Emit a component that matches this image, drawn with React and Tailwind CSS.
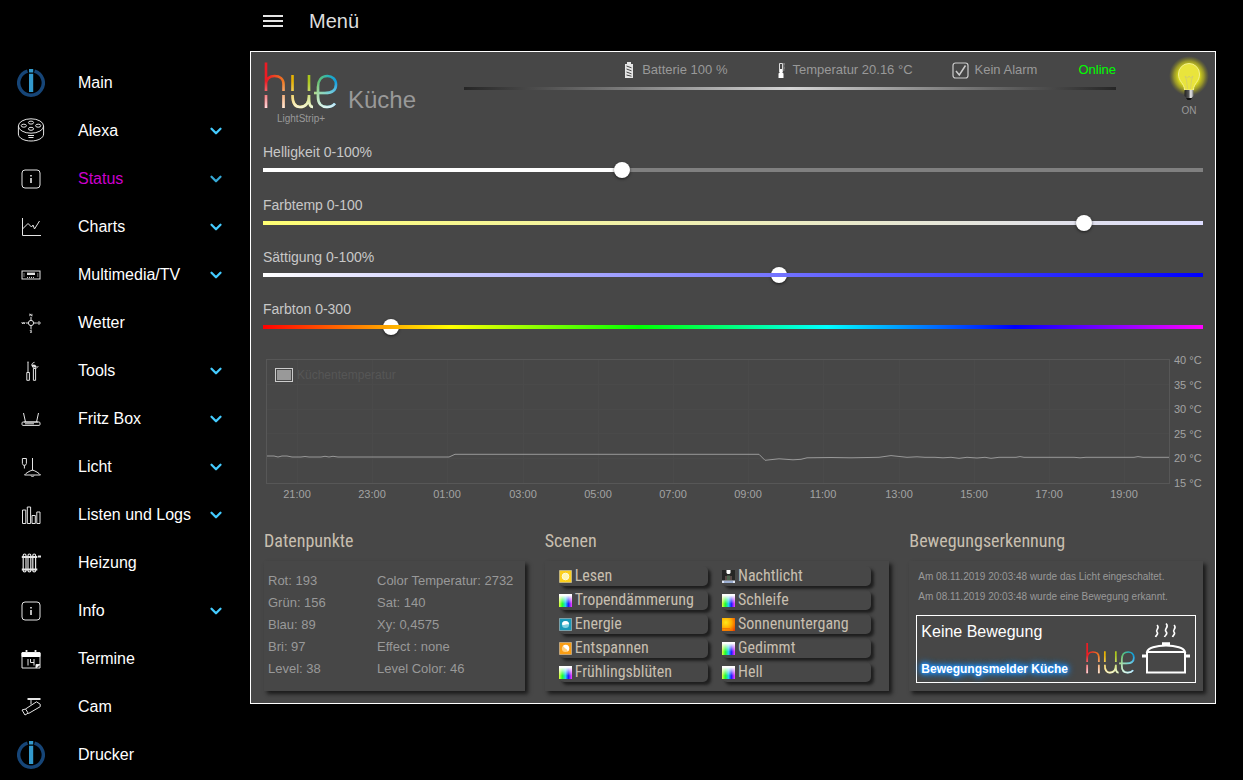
import React, { useId, useState } from "react"
import { FiChevronDown } from "react-icons/fi"

// ---------- sidebar icons ----------

const IoBrokerIcon = () => (
  <svg className="size-7" viewBox="0 0 28 28" fill="none">
    <path d="M10.5 2.1A12.3 12.3 0 1 0 17.5 2.1" stroke="#164577" strokeWidth="3.4" />
    <path d="M12 0h4.2v3.600h-4.200zM12 4.800h4.200V23h-4.200z" fill="#3399cc" />
  </svg>
)

// shared frame for the thin white line icons
const Line = ({ children, size = "size-5", box = 20 }) => (
  <svg
    className={size}
    viewBox={`0 0 ${box} ${box}`}
    fill="none"
    stroke="#e5e5e5"
    strokeWidth="1"
  >
    {children}
  </svg>
)

const EchoIcon = () => (
  <Line size="size-7" box={28}>
    <ellipse cx="14" cy="9" rx="12.6" ry="7.2" />
    <path d="M1.4 9v8c0 4 5.6 7 12.6 7s12.6-3 12.6-7V9" />
    <ellipse cx="14" cy="5.600" rx="2.600" ry="1.500" />
    <ellipse cx="14" cy="11.800" rx="2.600" ry="1.500" />
    <ellipse cx="6.800" cy="8.700" rx="2.600" ry="1.500" />
    <ellipse cx="21.200" cy="8.700" rx="2.600" ry="1.500" />
    <path d="M11 18.500h6M11.500 20.500h5" />
  </Line>
)

const InfoIcon = () => (
  <Line>
    <rect x="1" y="1" width="18" height="18" rx="3" />
    <path d="M10 6v1.6M10 9v5" strokeWidth="1.6" />
  </Line>
)

const ChartIcon = () => (
  <Line>
    <path d="M1.500 1v17.500H20M1.500 12l5.500-5.500 3.500 3.500 1.500-2 1.500 4L18.500 4" />
  </Line>
)

const ReceiverIcon = () => (
  <Line>
    <rect x="1" y="6" width="18" height="8" />
    <path d="M6 8.800h8" strokeWidth="2.400" />
    <path d="M3 8.500v3.500M16.800 8.500v3.500M6 12.400h8" strokeDasharray="1 1" />
  </Line>
)

const CompassIcon = () => (
  <Line>
    <circle cx="10" cy="10" r="2.600" />
    <path d="M10 4v3M10 13v3M5 10h2.400M12.600 10h3.200" />
    <path
      d="M8.900 3.200V.8l2 2.400V.8M.8 9l.8 2 .8-1.600.8 1.600.8-2M11 17.300c-2-.6-2.400.8-1 1.100s1 1.500-1 .9"
      strokeWidth=".9"
    />
    <circle cx="18" cy="10" r="1.200" strokeWidth=".9" />
  </Line>
)

const ToolsIcon = () => (
  <Line>
    <path d="M7 1v10M5.800 11.500h2.600v7.800H5.800zM6.500 1h1" />
    <path d="M12.400 7.500h2.200v11.800h-2.200zM13.500 1.300c-2 .5-3 1.800-2.600 3.200l1.800 2.800h2.600l2-2.200" />
    <path d="M11 4.500l2.500.3 1.500 1.500" strokeWidth="2.200" />
  </Line>
)

const RouterIcon = () => (
  <Line>
    <path d="M2.500 4l2 9M17.500 4l-2 9M3 13h14" />
    <rect x="1" y="13" width="18" height="3.400" rx="1" />
    <path d="M4 14.800h9" />
  </Line>
)

const LampIcon = () => (
  <Line>
    <path d="M1.400 1.500h4v5l-1 1.800h-2l-1-1.800zM3.400 8.500v3M11.500 1v12.500M11.500 13c-3 1-6.500 3-8 5h16c-1.500-2-5-4-8-5zM10 18.500c.3 1.500 2.700 1.500 3 0" />
  </Line>
)

const BarsIcon = () => (
  <Line>
    <path d="M1.500 5h3.300v13.500H1.500zM6.300 2h3.300v16.500H6.300zM11 10.500h3.300v8H11zM15.800 7h3.200v11.500h-3.200z" />
  </Line>
)

const RadiatorIcon = () => (
  <Line>
    {[2.2, 7, 11.8].map((x) => (
      <rect key={x} x={x} y="1" width="2.800" height="18" rx="1.400" strokeWidth="1.200" />
    ))}
    <path d="M.8 4h15.500M.8 16.500h15.500" strokeWidth="2" />
    <path d="M17 3.500h3" strokeWidth="2" />
  </Line>
)

const CalendarIcon = () => (
  <Line>
    <path d="M1 3.500h18V19H1z" />
    <path d="M1 4h18v3.500H1z" fill="#fff" stroke="#fff" />
    <path d="M5.500 1v3M14.500 1v3" strokeWidth="1.800" />
    <path d="M7 10v6.500M9.500 10v3.500h3.500M13 10v6.500" />
    <path d="M15 19v-3.500h4z" fill="#fff" />
  </Line>
)

const CamIcon = () => (
  <Line>
    <path d="M6.500 2H19.500" strokeWidth="2" />
    <path d="M10 3v4.500M4.500 12L15.500 4.800l3.700 2.400v2.500L7.500 16.500zM4.500 12l-3.500 1 3 5 3-1.800" />
  </Line>
)

const MENU = [
  { label: "Main", Icon: IoBrokerIcon },
  { label: "Alexa", Icon: EchoIcon, sub: true },
  { label: "Status", Icon: InfoIcon, sub: true, active: true },
  { label: "Charts", Icon: ChartIcon, sub: true },
  { label: "Multimedia/TV", Icon: ReceiverIcon, sub: true },
  { label: "Wetter", Icon: CompassIcon },
  { label: "Tools", Icon: ToolsIcon, sub: true },
  { label: "Fritz Box", Icon: RouterIcon, sub: true },
  { label: "Licht", Icon: LampIcon, sub: true },
  { label: "Listen und Logs", Icon: BarsIcon, sub: true },
  { label: "Heizung", Icon: RadiatorIcon },
  { label: "Info", Icon: InfoIcon, sub: true },
  { label: "Termine", Icon: CalendarIcon },
  { label: "Cam", Icon: CamIcon },
  { label: "Drucker", Icon: IoBrokerIcon },
]

const Sidebar = () => (
  <nav className="w-[250px] shrink-0 pt-[59px]">
    <ul>
      {MENU.map(({ label, Icon, sub, active }) => (
        <li key={label}>
          <a href="#" className="flex h-12 items-center pr-[25px] text-base">
            <span className="flex w-[62px] justify-center">
              <Icon />
            </span>
            <span className={active ? "pl-4 text-[#cc00cc]" : "pl-4 text-white"}>
              {label}
            </span>
            {sub && (
              <FiChevronDown
                className={active ? "ml-auto text-[#36a9d6]" : "ml-auto text-[#44ccff]"}
                size={18}
                strokeWidth={3}
              />
            )}
          </a>
        </li>
      ))}
    </ul>
  </nav>
)

// ---------- hue logo ----------

const HUE_PATH =
  "M3 1.500V30M3 34v13M3 24C3 17.500 7 15 11.500 15C17 15 20.500 18 20.500 23V30M20.500 34V47" +
  "M29.500 14V30M29.500 34C29.500 42 32 46 37 46C42.500 46 46 42 46 35M46 14V30M46 34V38C46 43 47 46 50 46" +
  "M51 32H62C69 32 73 29 73 23.500C73 18 69 15 64.500 15C58 15 55 20 55 26V36C55 43 59 46 64 46C68 46 70 45 72 42.500"

const HueLogo = ({ className }) => {
  const id = useId()
  return (
    <svg className={className} viewBox="0 0 76 48" fill="none" strokeWidth="2.600" role="img" aria-label="hue">
      <defs>
        <linearGradient id={`${id}c`} gradientUnits="userSpaceOnUse" x1="0" y1="0" x2="76" y2="0">
          <stop offset=".06" stopColor="#ec1c24" />
          <stop offset=".28" stopColor="#ee7d22" />
          <stop offset=".4" stopColor="#e6b800" />
          <stop offset=".62" stopColor="#a6c81e" />
          <stop offset=".74" stopColor="#5fc07a" />
          <stop offset=".86" stopColor="#27b3b8" />
          <stop offset=".97" stopColor="#0d9be0" />
        </linearGradient>
        <linearGradient id={`${id}w`} gradientUnits="userSpaceOnUse" x1="0" y1="20" x2="0" y2="47">
          <stop offset="0" stopColor="#fff" stopOpacity="0" />
          <stop offset="1" stopColor="#fff" stopOpacity=".85" />
        </linearGradient>
      </defs>
      <path d={HUE_PATH} stroke={`url(#${id}c)`} />
      <path d={HUE_PATH} stroke={`url(#${id}w)`} />
    </svg>
  )
}

// ---------- header ----------

const BatteryIcon = () => (
  <svg className="h-4 w-[10px]" viewBox="0 0 10 16">
    <path d="M3 0h4v2h2v14H1V2h2z" fill="#e6e6e6" />
    <path d="M2.500 4l5 1.800M2.500 7l5 1.800M2.500 10l5 1.800M2.500 13l5 1.200" stroke="#444" strokeWidth="1" />
  </svg>
)

const ThermoIcon = () => (
  <svg className="h-4 w-2" viewBox="0 0 8 16" fill="none">
    <path d="M1.500 10V1.500h3V10" stroke="#ddd" />
    <path d="M4.500 2H7M4.500 4h2M4.500 6H7M4.500 8h2" stroke="#bbb" strokeWidth=".8" />
    <path d="M2 7h2v3l1.500 1.500V16H.500v-4.500L2 10z" fill="#fff" />
  </svg>
)

const CheckIcon = () => (
  <svg className="size-[17px]" viewBox="0 0 17 17" fill="none" stroke="#ccc">
    <rect x="1" y="1" width="15" height="15" rx="2.500" strokeWidth="1.200" />
    <path d="M4 9l3.300 4L13.500 3.500" strokeWidth="1.500" />
  </svg>
)

const BulbIcon = () => (
  <svg className="h-[52px] w-10 shrink-0" viewBox="0 0 40 52" fill="none">
    <defs>
      <radialGradient id="bulbGlow">
        <stop offset=".5" stopColor="#e6e619" />
        <stop offset=".75" stopColor="#b8b51e" stopOpacity=".7" />
        <stop offset="1" stopColor="#8a8820" stopOpacity="0" />
      </radialGradient>
      <linearGradient id="bulbBase">
        <stop offset="0" stopColor="#222" />
        <stop offset=".45" stopColor="#555" />
        <stop offset=".7" stopColor="#eee" />
        <stop offset="1" stopColor="#777" />
      </linearGradient>
    </defs>
    <circle cx="20" cy="21" r="20" fill="url(#bulbGlow)" />
    <path
      d="M15.500 35c0-7-6-8-6-16a10.500 10.500 0 0 1 21 0c0 8-6 9-6 16z"
      fill="#e9e43c"
      stroke="#f3f08e"
    />
    <path
      d="M18.500 34l-1-9-1.500-4 2.500 2 1.500-2 1.500 2 2.500-2-1.500 4-1 9"
      stroke="#d0ca70"
      strokeWidth=".8"
    />
    <path d="M15.500 35h9v6l-2 2h-5l-2-2z" fill="url(#bulbBase)" />
    <path d="M17 43h6l-1.500 2h-3z" fill="#111" />
  </svg>
)

const PanelHeader = () => (
  <header className="flex h-[90px] items-start">
    <div className="pt-[9px]">
      <HueLogo className="h-12 w-[76px]" />
      <p className="text-center text-[10px] leading-5 text-[#999]">LightStrip+</p>
    </div>
    <h1 className="pt-[34px] pl-[9px] text-2xl leading-7 text-[#999]">Küche</h1>

    <div className="ml-12 flex-1 pt-2">
      <ul className="flex h-5 items-center justify-end text-[13px] text-[#999]">
        <li className="flex items-center gap-2">
          <BatteryIcon />
          Batterie 100 %
        </li>
        <li className="ml-[51px] flex items-center gap-1.5">
          <ThermoIcon />
          Temperatur 20.16 °C
        </li>
        <li className="ml-[39px] flex items-center gap-1.5">
          <CheckIcon />
          Kein Alarm
        </li>
        <li className="ml-[41px] text-[#00ff00]">Online</li>
      </ul>
      <div className="mt-[7px] h-[3px] bg-[linear-gradient(90deg,#262626,#d4d4d4,#262626)]" />
    </div>

    <button type="button" className="ml-[59px] flex w-7 flex-col items-center pt-[3px]">
      <BulbIcon />
      <span className="text-[10px] leading-2 text-[#999]">ON</span>
    </button>
  </header>
)

// ---------- sliders ----------

const THUMB =
  "[&::-webkit-slider-thumb]:size-4 [&::-webkit-slider-thumb]:appearance-none [&::-webkit-slider-thumb]:rounded-full [&::-webkit-slider-thumb]:bg-white [&::-webkit-slider-thumb]:shadow-[0_1px_3px_rgba(0,0,0,0.6)]"

// "over" draws the coloured track above the thumb
const Slider = ({ id, label, start, max = 100, track, over = false }) => {
  const [value, setValue] = useState(start)
  const fill = (value / max) * 100
  const bar = (
    <div
      className={`pointer-events-none absolute inset-x-0 top-1.5 h-1 ${track}`}
      style={
        track
          ? undefined
          : { background: `linear-gradient(90deg, #fff ${fill}%, #808080 ${fill}%)` }
      }
    />
  )

  return (
    <div>
      <label htmlFor={id} className="block text-sm text-[#c8c8c8]">
        {label}
      </label>
      <div className="relative h-4">
        {!over && bar}
        <input
          id={id}
          type="range"
          min="0"
          max={max}
          value={value}
          onChange={(e) => setValue(Number(e.target.value))}
          className={`relative block h-4 w-full cursor-pointer appearance-none bg-transparent ${THUMB}`}
        />
        {over && bar}
      </div>
    </div>
  )
}

// ---------- temperature chart ----------

const TIMES = [
  "21:00", "23:00", "01:00", "03:00", "05:00", "07:00",
  "09:00", "11:00", "13:00", "15:00", "17:00", "19:00",
]
const TEMPS = [40, 35, 30, 25, 20, 15]

const TempChart = () => (
  <svg
    className="mt-[17px] block w-full"
    viewBox="0 0 940 152"
    fontFamily="Liberation Sans, Arial, sans-serif"
  >
    <g stroke="#4a4a4a">
      {TIMES.map((t, i) => (
        <path key={t} d={`M${Math.round(34 + i * 75.2)}.5 8V131`} />
      ))}
      {TEMPS.slice(1, 5).map((t, i) => (
        <path key={t} d={`M4 ${Math.round(32 + i * 24.7)}.5H906`} />
      ))}
    </g>
    <rect x="3.500" y="7.500" width="903" height="124" fill="none" stroke="#575757" />
    <path
      d="M4 104h7l4 1 4-1h5l5 1h9l4-.500 4 .500h12l4-.700 4 .700 4-.700 5 .700H186l6-2.700H496l6 6 14-1.500 14 1 8-.500 6-1.500 24-.300 20 .300 28-.500 12-1.700 16 1.700 10-.500 8 .500h10l8 .500 8-.500 8 1 8-1 10 .700 8-.700 6 1 8-1h17l4-.700 4 .700h50l6 .500 6-.500h48l4-.700 5 .700h26"
      fill="none"
      stroke="#999"
    />
    <rect x="12.500" y="16.500" width="17" height="13" fill="#474747" stroke="#ccc" />
    <rect x="14" y="18" width="14" height="10" fill="#999" />
    <text x="34" y="27" fontSize="12" fill="#565656">
      Küchentemperatur
    </text>
    <g fontSize="11" fill="#a3a3a3">
      {TEMPS.map((t, i) => (
        <text key={t} x="911" y={12 + Math.round(i * 24.6)}>
          {t} °C
        </text>
      ))}
      {TIMES.map((t, i) => (
        <text key={t} x={Math.round(34 + i * 75.2)} y="146" textAnchor="middle">
          {t}
        </text>
      ))}
    </g>
  </svg>
)

// ---------- bottom boxes ----------

const Box = ({ title, className, children }) => (
  <section className="min-w-0">
    <h2 className="font-['Roboto_Condensed','Roboto',sans-serif] text-lg leading-6 text-[#c8bfb0]">
      {title}
    </h2>
    <div className={`mt-2 h-[130px] shadow-[3px_3px_4px_#1a1a1a] ${className}`}>{children}</div>
  </section>
)

const DATA = [
  ["Rot: 193", "Grün: 156", "Blau: 89", "Bri: 97", "Level: 38"],
  ["Color Temperatur: 2732", "Sat: 140", "Xy: 0,4575", "Effect : none", "Level Color: 46"],
]

const SceneIcon = ({ kind }) => {
  const id = useId()
  if (kind === "night") {
    return (
      <svg className="size-[13px] shrink-0" viewBox="0 0 13 13">
        <path d="M0 0h13v13H0z" fill="#262626" />
        <path d="M0 10.500h13V13H0z" fill="#dfe6f5" />
        <path d="M2 12h9" stroke="#5a78b0" />
        <path d="M4.500 0h4v3l-1 1h-2l-1-1z" fill="#fff" />
        <path d="M3 6h7v4H3z" fill="#5a4a48" />
        <path d="M5 5.500h3v4.500H5z" fill="#4d6650" />
      </svg>
    )
  }
  if (kind === "sunset") {
    return (
      <svg className="size-[13px] shrink-0" viewBox="0 0 13 13">
        <defs>
          <radialGradient id={id} cx=".3" cy=".35" r=".9">
            <stop offset="0" stopColor="#ffe81a" />
            <stop offset=".5" stopColor="#ffab00" />
            <stop offset="1" stopColor="#e83a00" />
          </radialGradient>
        </defs>
        <path d="M0 0h13v13H0z" fill={`url(#${id})`} />
        <path d="M0 10.500h8M3 12h8" stroke="#f47a00" />
      </svg>
    )
  }
  if (kind === "color") {
    return (
      <svg className="size-[13px] shrink-0" viewBox="0 0 13 13">
        <defs>
          <linearGradient id={`${id}h`}>
            <stop offset="0" stopColor="#e6ff3c" />
            <stop offset=".25" stopColor="#1fff2b" />
            <stop offset=".5" stopColor="#1fd0f0" />
            <stop offset=".72" stopColor="#1a1aff" />
            <stop offset="1" stopColor="#ff3cff" />
          </linearGradient>
          <linearGradient id={`${id}v`} x2="0" y2="1">
            <stop offset=".1" stopColor="#fff" />
            <stop offset=".75" stopColor="#fff" stopOpacity="0" />
          </linearGradient>
        </defs>
        <path d="M0 0h13v13H0z" fill={`url(#${id}h)`} />
        <path d="M0 0h13v13H0z" fill={`url(#${id}v)`} />
      </svg>
    )
  }
  const bg = { read: "#fccf1c", energy: "#1a98b8", relax: "#f99d14" }[kind]
  return (
    <svg className="size-[13px] shrink-0" viewBox="0 0 13 13">
      <rect x=".5" y=".5" width="12" height="12" fill={bg} stroke="#fff" strokeOpacity=".35" />
      {kind === "read" && (
        <circle cx="6.500" cy="6.500" r="3.300" fill="#fff6b0" stroke="#fffbe0" />
      )}
      {kind === "energy" && (
        <>
          <circle cx="6.500" cy="6.500" r="3.600" fill="#7fd0e0" />
          <path d="M3 6.500a3.500 3.500 0 0 1 7 0c-2.500-1-4 1.500-7 0z" fill="#fff" />
        </>
      )}
      {kind === "relax" && (
        <>
          <circle cx="6.500" cy="6.500" r="3.600" fill="#ffcf80" />
          <path d="M4 4a3.600 3.600 0 1 1 4.500 5.500C9 7 6 7 4 4z" fill="#fff" />
        </>
      )}
    </svg>
  )
}

const SCENES = [
  ["Lesen", "read"],
  ["Nachtlicht", "night"],
  ["Tropendämmerung", "color"],
  ["Schleife", "color"],
  ["Energie", "energy"],
  ["Sonnenuntergang", "sunset"],
  ["Entspannen", "relax"],
  ["Gedimmt", "color"],
  ["Frühlingsblüten", "color"],
  ["Hell", "color"],
]

const PotIcon = () => (
  <svg className="h-[54px] w-[50px]" viewBox="0 0 50 54" fill="none" stroke="#fff" strokeWidth="2">
    <path
      d="M16 3c3.500 3-2 5 0 7s-1 3-1.500 5M25 1.500c4 3.500-2.500 5.500 0 8s-1 3.500-1.500 5.500M33 3c3.500 3-2 5 0 7s-1 3-1.500 5"
      strokeWidth="1.600"
    />
    <path d="M21 22h8" strokeWidth="3.500" />
    <path d="M6 30c1-4 9-6.500 19-6.500S43 26 44 30z" />
    <path d="M6 30v20.500h38V30" />
    <path d="M1 34h5M44 34h5" strokeWidth="3" />
  </svg>
)

const App = () => {
  return (
    <div className="flex min-h-screen bg-black font-['Liberation_Sans',Arial,sans-serif]">
      <Sidebar />

      <main className="min-w-0 flex-1 pr-[27px]">
        <div className="flex h-[51px] items-start pt-[7px] pl-[13px]">
          <button type="button" aria-label="Navigation" className="flex h-7 items-center">
            <svg className="h-3 w-5" viewBox="0 0 20 12" stroke="#e5e5e5" strokeWidth="2">
              <path d="M0 1h20M0 6h20M0 11h20" />
            </svg>
          </button>
          <span className="pl-[26px] text-xl text-[#ddd]">Menü</span>
        </div>

        <div className="border border-white bg-[#474747] px-3 pb-3">
          <PanelHeader />

          <div className="mb-[17px]">
            <Slider id="bri" label="Helligkeit 0-100%" start={38} track="" />
          </div>
          <div className="flex flex-col gap-4">
            <Slider
              id="ct"
              label="Farbtemp 0-100"
              start={88}
              track="bg-[linear-gradient(90deg,#ffff73,#dcdcff)]"
            />
            <Slider
              id="sat"
              label="Sättigung 0-100%"
              start={55}
              track="bg-[linear-gradient(90deg,#fff,#00f)]"
              over
            />
            <Slider
              id="hue"
              label="Farbton 0-300"
              start={39}
              max={300}
              track="bg-[linear-gradient(90deg,#f00,#ff0_20%,#0f0_40%,#0ff_60%,#00f_80%,#f0f)]"
              over
            />
          </div>

          <TempChart />

          <div className="mt-[25px] grid grid-cols-[261fr_345fr_294fr] gap-5 pl-px">
            <Box
              title="Datenpunkte"
              className="flex pt-[9px] pl-1 text-[13px] leading-[22px] text-[#999]"
            >
              {DATA.map((col, i) => (
                <ul key={i} className={i === 0 ? "w-[109px]" : "flex-1"}>
                  {col.map((row) => (
                    <li key={row}>{row}</li>
                  ))}
                </ul>
              ))}
            </Box>

            <Box
              title="Scenen"
              className="grid grid-cols-2 content-start gap-x-[14px] gap-y-1 pt-[5px] pr-[18px] pl-[14px]"
            >
              {SCENES.map(([name, kind]) => (
                <button
                  key={name}
                  type="button"
                  className="flex h-5 items-center gap-[3px] rounded-[5px] text-left font-['Roboto_Condensed','Roboto',sans-serif] text-base leading-5 text-[#c8bfb0] shadow-[3px_3px_3px_#1f1f1f]"
                >
                  <SceneIcon kind={kind} />
                  {name}
                </button>
              ))}
            </Box>

            <Box title="Bewegungserkennung" className="px-[7px] pt-1.5">
              <div className="pl-0.5 text-[10px] leading-5 text-[#999]">
                <p>Am 08.11.2019 20:03:48 wurde das Licht eingeschaltet.</p>
                <p>Am 08.11.2019 20:03:48 wurde eine Bewegung erkannt.</p>
              </div>
              <div className="mt-2 flex h-[68px] border border-white pl-1">
                <div className="flex flex-1 flex-col justify-between whitespace-nowrap pt-1 pb-1">
                  <p className="text-base text-white">Keine Bewegung</p>
                  <p className="text-xs font-bold leading-[18px] text-white [text-shadow:0_0_3px_#1e90ff,0_0_5px_#1e90ff,0_0_7px_#1e90ff,0_0_9px_#1e90ff]">
                    Bewegungsmelder Küche
                  </p>
                </div>
                <HueLogo className="mt-[26px] h-8 w-[51px]" />
                <div className="pt-1.5 pr-1 pl-[5px]">
                  <PotIcon />
                </div>
              </div>
            </Box>
          </div>
        </div>
      </main>
    </div>
  )
}

export default App
